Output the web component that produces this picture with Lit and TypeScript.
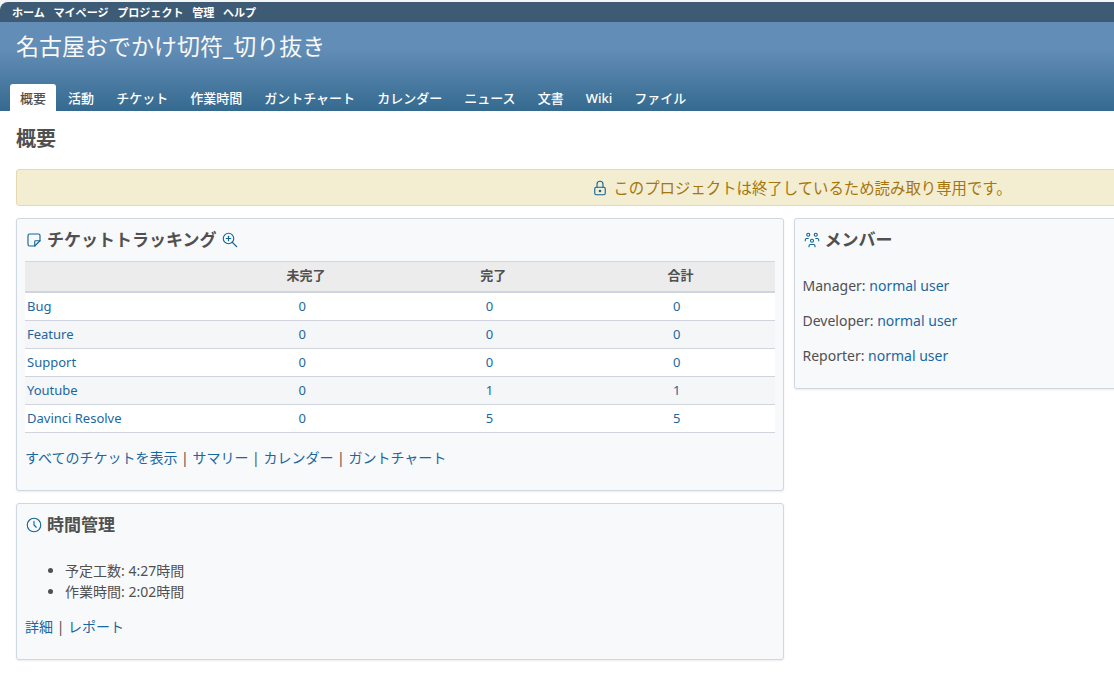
import { LitElement, html, css, svg } from "lit";
import { customElement } from "lit/decorators.js";

const TOP = ["ホーム", "マイページ", "プロジェクト", "管理", "ヘルプ"];
const TABS = ["概要", "活動", "チケット", "作業時間", "ガントチャート", "カレンダー", "ニュース", "文書", "Wiki", "ファイル"];
const ROWS: [string, number, number, number][] = [
  ["Bug", 0, 0, 0],
  ["Feature", 0, 0, 0],
  ["Support", 0, 0, 0],
  ["Youtube", 0, 1, 1],
  ["Davinci Resolve", 0, 5, 5],
];
const ROLES = ["Manager", "Developer", "Reporter"];

const ICONS = {
  lock: svg`<path d="M5 13a2 2 0 0 1 2 -2h10a2 2 0 0 1 2 2v6a2 2 0 0 1 -2 2h-10a2 2 0 0 1 -2 -2v-6z"/><path d="M11 16a1 1 0 1 0 2 0a1 1 0 0 0 -2 0"/><path d="M8 11v-4a4 4 0 1 1 8 0v4"/>`,
  note: svg`<path d="M13 20l7 -7"/><path d="M13 20v-6a1 1 0 0 1 1 -1h6v-7a2 2 0 0 0 -2 -2h-12a2 2 0 0 0 -2 2v12a2 2 0 0 0 2 2h7"/>`,
  zoom: svg`<path d="M10 10m-7 0a7 7 0 1 0 14 0a7 7 0 1 0 -14 0"/><path d="M7 10l6 0"/><path d="M10 7l0 6"/><path d="M21 21l-6 -6"/>`,
  clock: svg`<path d="M3 12a9 9 0 1 0 18 0a9 9 0 0 0 -18 0"/><path d="M12 7v5l3 3"/>`,
  group: svg`<path d="M10 13a2 2 0 1 0 4 0a2 2 0 0 0 -4 0"/><path d="M8 21v-1a2 2 0 0 1 2 -2h4a2 2 0 0 1 2 2v1"/><path d="M15 5a2 2 0 1 0 4 0a2 2 0 0 0 -4 0"/><path d="M17 10h2a2 2 0 0 1 2 2v1"/><path d="M5 5a2 2 0 1 0 4 0a2 2 0 0 0 -4 0"/><path d="M3 13v-1a2 2 0 0 1 2 -2h2"/>`,
};

const icon = (name: keyof typeof ICONS) =>
  html`<svg class="icon" viewBox="0 0 24 24">${ICONS[name]}</svg>`;

const links = (items: string[]) =>
  html`${items.map((t, i) => html`${i ? " | " : ""}<a>${t}</a>`)}`;

@customElement("app-root")
export class AppRoot extends LitElement {
  static styles = css`
    :host {
      display: block;
      height: 684px;
      overflow: hidden;
      box-sizing: border-box;
      padding-top: 2px;
      background: linear-gradient(#f3f5f4 0 12px, #fff 12px);
      color: #505050;
      font: 14px/21px "Noto Sans", "Noto Sans CJK JP", sans-serif;
    }
    * { box-sizing: border-box; }
    a { color: #1b679f; }
    .page { width: 1606px; }
    .top {
      display: flex;
      gap: 8.7px;
      height: 20px;
      padding-left: 12px;
      border-top-left-radius: 8px;
      background: #3e5b76;
      color: #fff;
      font-size: 11.05px;
      font-weight: 700;
      line-height: 21px;
    }
    .header {
      display: flex;
      flex-direction: column;
      justify-content: space-between;
      height: 89px;
      background: linear-gradient(#628db6 0, #628db6 30%, #356a8f 100%);
      color: #f8f8f8;
    }
    .title {
      margin: 0;
      padding: 7px 16px 0;
      font-size: 23px;
      font-weight: 400;
      line-height: 34px;
    }
    .tabs { display: flex; gap: 2.05px; padding-left: 10px; }
    .tab {
      height: 27px;
      padding: 0 10px;
      border-radius: 3px 3px 0 0;
      font-size: 13px;
      font-weight: 500;
      line-height: 28px;
      color: #fff;
    }
    .tab.selected { background: #fff; color: #505050; }
    .content { padding: 13px 16px; }
    h2 { margin: 0 0 15px; font-size: 20px; line-height: 30px; font-weight: 700; }
    .closed {
      display: flex;
      align-items: center;
      justify-content: center;
      gap: 4px;
      height: 37px;
      margin-bottom: 12px;
      padding-right: 3px;
      border: 1px solid #e7d8b2;
      border-radius: 3px;
      background: #f3edd1;
      color: #a6750c;
      font-size: 15.4px;
    }
    .closed span { padding-top: 2px; }
    .icon {
      flex: none;
      width: 18px;
      height: 18px;
      fill: none;
      stroke: #169;
      stroke-width: 1.5;
      stroke-linecap: round;
      stroke-linejoin: round;
    }
    .columns { display: flex; align-items: flex-start; gap: 10px; }
    .left { display: flex; flex-direction: column; gap: 12px; width: 768px; }
    .right { flex: 1; }
    .box {
      padding: 8px;
      border: 1px solid #cfd7e1;
      border-radius: 3px;
      background: #f8f9fb;
      box-shadow: 0 1px 2px rgba(0, 0, 0, 0.08);
    }
    .tracking { height: 273px; }
    .time { height: 157px; }
    .members { height: 171px; padding-left: 7.5px; }
    h3 {
      display: flex;
      align-items: center;
      gap: 4px;
      margin: 0;
      height: 26px;
      font-size: 17px;
      font-weight: 700;
    }
    h3 span { line-height: 26px; }
    .grid { margin-top: 8px; border-top: 1px solid #cfd7e1; font-size: 13px; }
    .row {
      display: grid;
      grid-template-columns: 183.5px 187.3px 187.3px 187.3px;
      height: 28px;
      border-bottom: 1px solid #cfd4de;
      background: #fff;
      line-height: 27px;
      text-align: center;
    }
    .row.even { background: #f5f6f8; }
    .row.head {
      height: 31px;
      border-bottom-width: 2px;
      background: #ececec;
      font-weight: 700;
      line-height: 27px;
      grid-template-columns: 187.3px 187.3px 187.3px 187.3px;
    }
    .name { padding-left: 2px; text-align: left; }
    .actions { margin: 14px 0 0; }
    ul { margin: 22px 0 14px; padding-left: 40px; }
    .person { margin: 0 0 14px; }
    .members h3 { margin-bottom: 22px; }
  `;

  render() {
    return html`
      <div class="page">
        <nav class="top">${TOP.map((t) => html`<span>${t}</span>`)}</nav>
        <header class="header">
          <h1 class="title">名古屋おでかけ切符_切り抜き</h1>
          <nav class="tabs">
            ${TABS.map((t, i) => html`<span class="tab ${i ? "" : "selected"}">${t}</span>`)}
          </nav>
        </header>
        <main class="content">
          <h2>概要</h2>
          <div class="closed">${icon("lock")}<span>このプロジェクトは終了しているため読み取り専用です。</span></div>
          <div class="columns">
            <div class="left">
              <section class="box tracking">
                <h3>${icon("note")}<span>チケットトラッキング</span>${icon("zoom")}</h3>
                <div class="grid">
                  <div class="row head"><span></span><span>未完了</span><span>完了</span><span>合計</span></div>
                  ${ROWS.map(
                    ([n, ...v], i) => html`<div class="row ${i % 2 ? "even" : ""}">
                      <a class="name">${n}</a>${v.map((x) => html`<a>${x}</a>`)}
                    </div>`
                  )}
                </div>
                <p class="actions">${links(["すべてのチケットを表示", "サマリー", "カレンダー", "ガントチャート"])}</p>
              </section>
              <section class="box time">
                <h3>${icon("clock")}<span>時間管理</span></h3>
                <ul><li>予定工数: 4:27時間</li><li>作業時間: 2:02時間</li></ul>
                <p class="actions">${links(["詳細", "レポート"])}</p>
              </section>
            </div>
            <div class="right">
              <section class="box members">
                <h3>${icon("group")}<span>メンバー</span></h3>
                ${ROLES.map((r) => html`<p class="person">${r}: <a>normal user</a></p>`)}
              </section>
            </div>
          </div>
        </main>
      </div>
    `;
  }
}
